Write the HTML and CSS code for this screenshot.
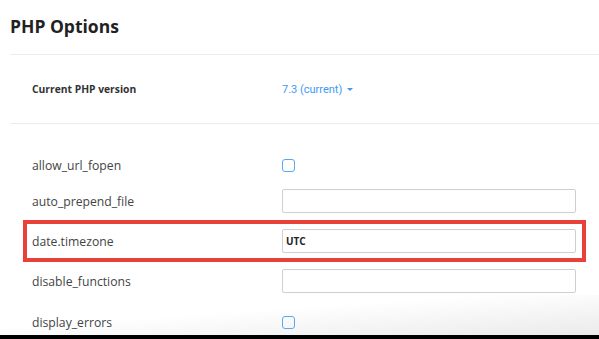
FILE: index.html
```html
<!DOCTYPE html>
<html lang="en">
<head>
<meta charset="UTF-8">
<meta name="viewport" content="width=device-width, initial-scale=1.0">
<title>PHP Options</title>
<link rel="stylesheet" href="styles.css">
</head>
<body>

<div class="shade"></div>

<div class="page">
    <h1 class="title">PHP Options</h1>

    <div class="version-row">
        <span class="label strong">Current PHP version</span>
        <a class="version" href="#">7.3 (current) <span class="caret"></span></a>
    </div>

    <div class="options">
        <div class="row">
            <span class="label">allow_url_fopen</span>
            <span class="check"></span>
        </div>
        <div class="row">
            <span class="label">auto_prepend_file</span>
            <input class="field" type="text">
        </div>
        <div class="row highlight">
            <span class="label">date.timezone</span>
            <input class="field" type="text" value="UTC">
        </div>
        <div class="row">
            <span class="label">disable_functions</span>
            <input class="field" type="text">
        </div>
        <div class="row last">
            <span class="label">display_errors</span>
            <span class="check"></span>
        </div>
    </div>
</div>

<div class="bottom-bar"></div>

</body>
</html>
```

FILE: styles.css
```css
body {
    font-family: "Open Sans", "Liberation Sans", sans-serif;
    margin: 0;
    background-color: #fff;
    color: #333;
    height: 339px;
    overflow: hidden;
    position: relative;
}

.page {
    position: relative;
    padding-left: 10px;
}

.title {
    font-size: 17.5px;
    font-weight: 700;
    color: #222;
    margin: 0;
    padding-top: 13px;
    height: 41px;
    line-height: 26px;
    border-bottom: 1px solid #ececec;
}

.version-row {
    display: grid;
    grid-template-columns: 250px auto;
    align-items: center;
    height: 68px;
    padding-left: 22px;
    border-bottom: 1px solid #ececec;
}

.label {
    font-size: 12.2px;
    color: #444;
}

.strong {
    font-size: 10.3px;
    font-weight: 700;
    color: #333;
}

.version {
    font-family: Roboto, "Liberation Sans", sans-serif;
    font-size: 11px;
    color: #3d9af2;
    text-decoration: none;
    display: flex;
    align-items: center;
    gap: 5px;
}

.caret {
    width: 0;
    height: 0;
    border-left: 3.5px solid transparent;
    border-right: 3.5px solid transparent;
    border-top: 3.5px solid #3d9af2;
}

.options {
    padding-top: 23px;
}

.row {
    display: grid;
    grid-template-columns: 250px 294px;
    align-items: center;
    height: 36px;
    padding-left: 22px;
}

.row.highlight {
    height: 34px;
    margin: 1px 13px 0 13px;
    padding-left: 5px;
    border: 4px solid #e9403a;
}

.row.highlight + .row {
    height: 38px;
}

.row.last {
    height: 44px;
}

.check {
    box-sizing: border-box;
    width: 13px;
    height: 13px;
    border: 1.5px solid #5aa8f2;
    border-radius: 3px;
}

.field {
    box-sizing: border-box;
    width: 294px;
    height: 24px;
    border: 1px solid #cfcfcf;
    border-radius: 2px;
    padding: 0 3px;
    font-family: "Open Sans", "Liberation Sans", sans-serif;
    font-size: 10px;
    font-weight: 700;
    color: #222;
    outline: none;
    background: transparent;
}

.shade {
    position: absolute;
    left: 0;
    right: 0;
    bottom: 4px;
    height: 40px;
    background: linear-gradient(to bottom right, rgba(238, 238, 238, 0) 40%, rgba(232, 232, 232, 0.9));
}

.bottom-bar {
    position: absolute;
    left: 0;
    right: 0;
    bottom: 0;
    height: 4px;
    background-color: #000;
}
```
